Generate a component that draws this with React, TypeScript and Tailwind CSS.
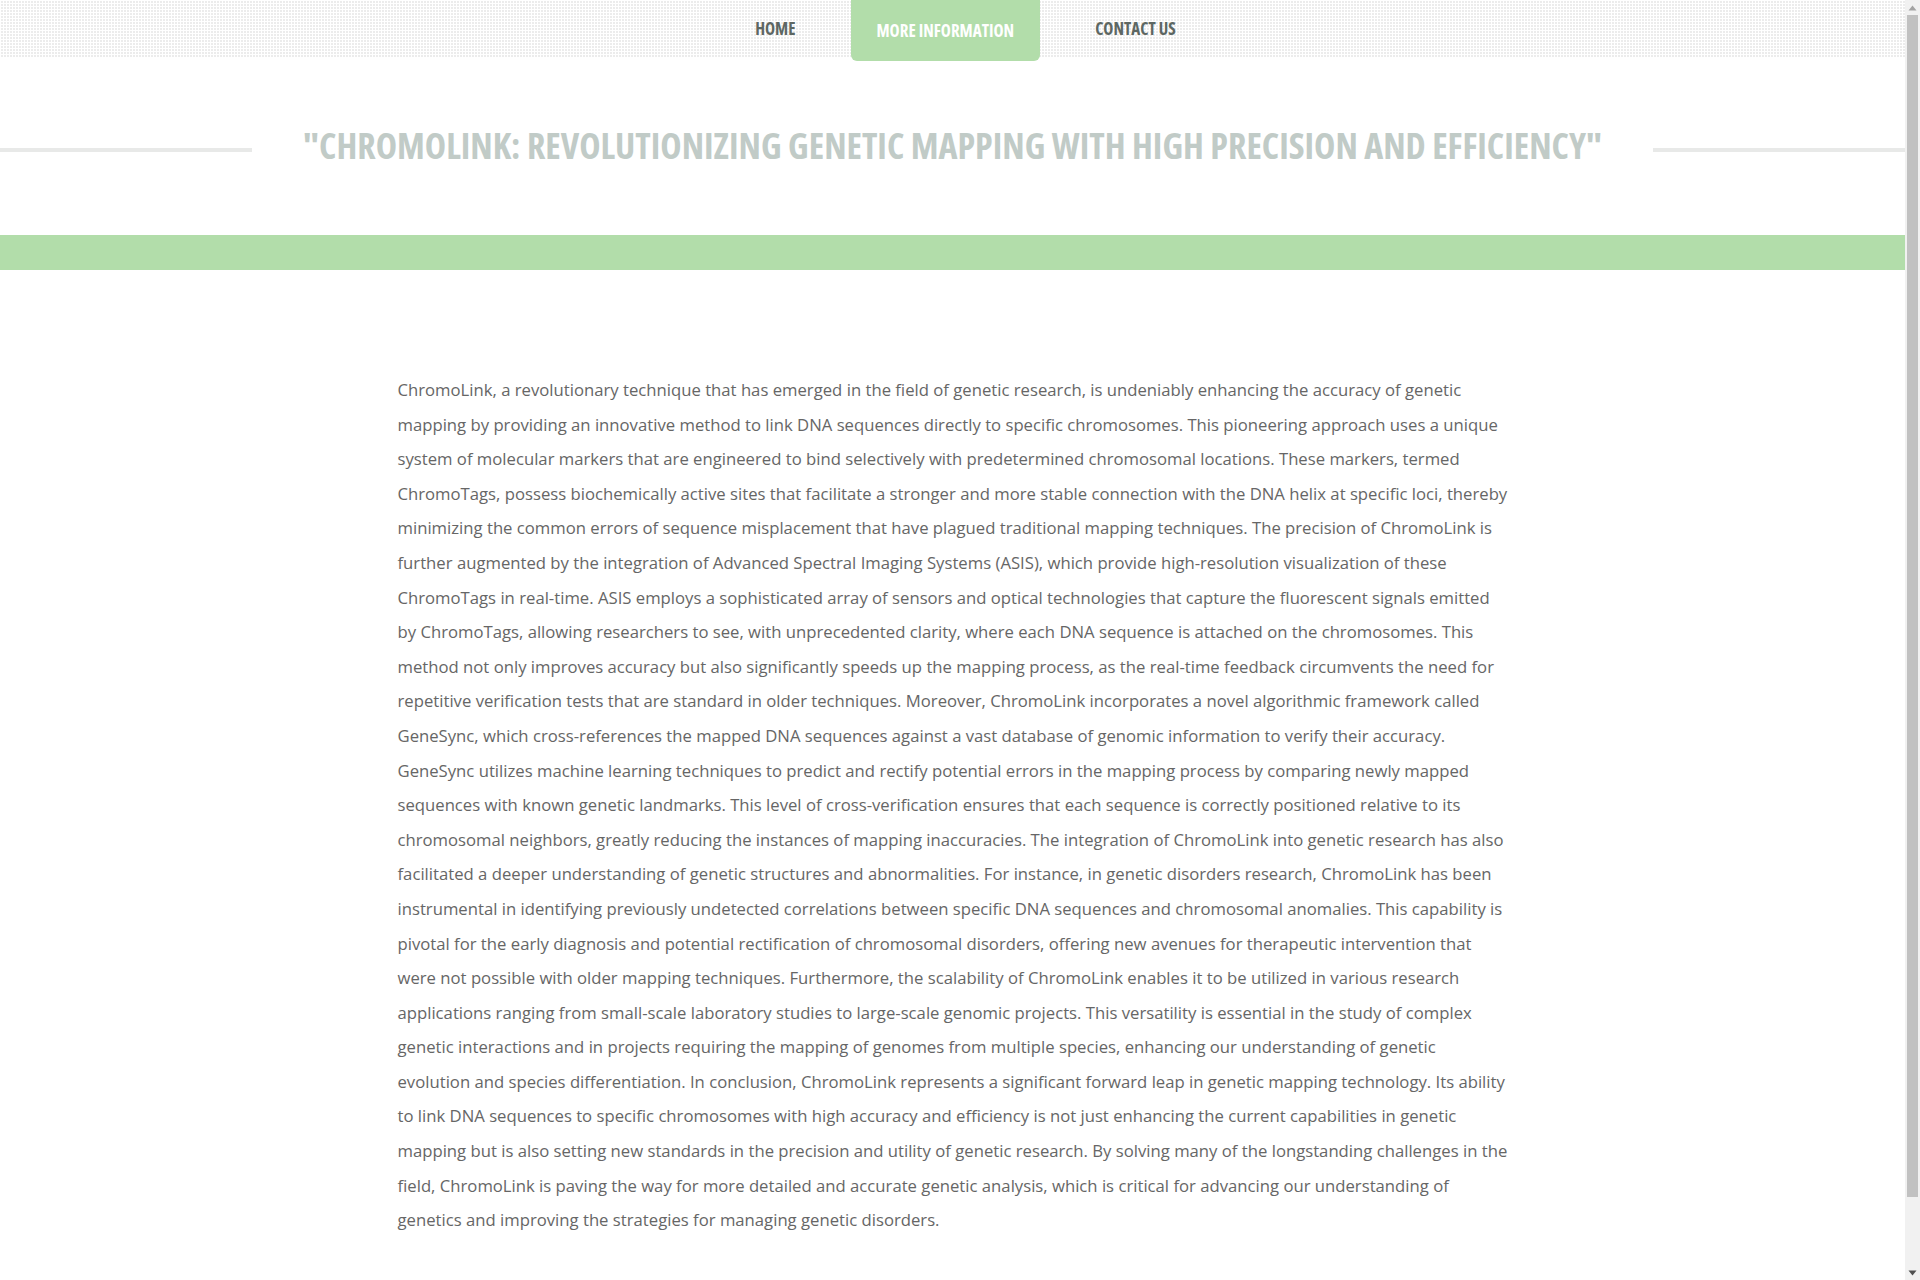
import React from "react";

const paragraph =
  "ChromoLink, a revolutionary technique that has emerged in the field of genetic research, is undeniably enhancing the accuracy of genetic mapping by providing an innovative method to link DNA sequences directly to specific chromosomes. This pioneering approach uses a unique system of molecular markers that are engineered to bind selectively with predetermined chromosomal locations. These markers, termed ChromoTags, possess biochemically active sites that facilitate a stronger and more stable connection with the DNA helix at specific loci, thereby minimizing the common errors of sequence misplacement that have plagued traditional mapping techniques. The precision of ChromoLink is further augmented by the integration of Advanced Spectral Imaging Systems (ASIS), which provide high-resolution visualization of these ChromoTags in real-time. ASIS employs a sophisticated array of sensors and optical technologies that capture the fluorescent signals emitted by ChromoTags, allowing researchers to see, with unprecedented clarity, where each DNA sequence is attached on the chromosomes. This method not only improves accuracy but also significantly speeds up the mapping process, as the real-time feedback circumvents the need for repetitive verification tests that are standard in older techniques. Moreover, ChromoLink incorporates a novel algorithmic framework called GeneSync, which cross-references the mapped DNA sequences against a vast database of genomic information to verify their accuracy. GeneSync utilizes machine learning techniques to predict and rectify potential errors in the mapping process by comparing newly mapped sequences with known genetic landmarks. This level of cross-verification ensures that each sequence is correctly positioned relative to its chromosomal neighbors, greatly reducing the instances of mapping inaccuracies. The integration of ChromoLink into genetic research has also facilitated a deeper understanding of genetic structures and abnormalities. For instance, in genetic disorders research, ChromoLink has been instrumental in identifying previously undetected correlations between specific DNA sequences and chromosomal anomalies. This capability is pivotal for the early diagnosis and potential rectification of chromosomal disorders, offering new avenues for therapeutic intervention that were not possible with older mapping techniques. Furthermore, the scalability of ChromoLink enables it to be utilized in various research applications ranging from small-scale laboratory studies to large-scale genomic projects. This versatility is essential in the study of complex genetic interactions and in projects requiring the mapping of genomes from multiple species, enhancing our understanding of genetic evolution and species differentiation. In conclusion, ChromoLink represents a significant forward leap in genetic mapping technology. Its ability to link DNA sequences to specific chromosomes with high accuracy and efficiency is not just enhancing the current capabilities in genetic mapping but is also setting new standards in the precision and utility of genetic research. By solving many of the longstanding challenges in the field, ChromoLink is paving the way for more detailed and accurate genetic analysis, which is critical for advancing our understanding of genetics and improving the strategies for managing genetic disorders.";

function Scrollbar() {
  return (
    <div className="flex h-full w-[15px] shrink-0 flex-col items-center bg-[#f1f1f1]">
      <div className="flex h-[15px] w-full items-center justify-center">
        <svg width="9" height="6" viewBox="0 0 9 6">
          <path d="M4.5 0.5 L8.5 5.5 L0.5 5.5 Z" fill="#a3a3a3" />
        </svg>
      </div>
      <div className="h-[1182px] w-[11px] bg-[#c1c1c1]" />
      <div className="flex-1" />
      <div className="flex h-[15px] w-full items-center justify-center">
        <svg width="9" height="6" viewBox="0 0 9 6">
          <path d="M0.5 0.5 L8.5 0.5 L4.5 5.5 Z" fill="#505050" />
        </svg>
      </div>
    </div>
  );
}

export default function App() {
  return (
    <div className="flex h-[1280px] overflow-hidden bg-white font-['Open_Sans',sans-serif]">
      <div className="min-w-0 flex-1">
        <nav className="h-[57px] bg-[#ececec] [background-image:linear-gradient(to_right,#ffffff_1px,transparent_1px),linear-gradient(to_bottom,#ffffff_1px,transparent_1px)] [background-size:3px_3px]">
          <ul className="flex h-full items-start justify-center gap-[30px] pl-[26px]">
            <li className="flex h-[57px] items-center px-[25px] text-[17px] font-bold uppercase text-[#5d6763] [font-stretch:75%]">
              Home
            </li>
            <li className="flex h-[61px] items-center rounded-b-[6px] bg-[#b2ddaa] px-[26px] text-[17px] font-bold uppercase text-white [font-stretch:75%]">
              More Information
            </li>
            <li className="flex h-[57px] items-center px-[25px] text-[17px] font-bold uppercase text-[#5d6763] [font-stretch:75%]">
              Contact Us
            </li>
          </ul>
        </nav>

        <header className="flex h-[178px] items-center">
          <div className="mt-[8px] h-[4px] flex-1 bg-[#e8e9e8]" />
          <h1 className="px-[51px] text-[36px] font-bold uppercase leading-none text-[#c1cbc7] [font-stretch:75%]">
            "ChromoLink: Revolutionizing Genetic Mapping with High Precision and Efficiency"
          </h1>
          <div className="mt-[8px] h-[4px] flex-1 bg-[#e8e9e8]" />
        </header>

        <div className="h-[35px] bg-[#b2ddaa]" />

        <main className="mx-auto max-w-[1110px] pb-[110px] pt-[103px]">
          <p className="text-[16.7px] leading-[34.6px] text-[#666666]">{paragraph}</p>
        </main>
      </div>
      <Scrollbar />
    </div>
  );
}
